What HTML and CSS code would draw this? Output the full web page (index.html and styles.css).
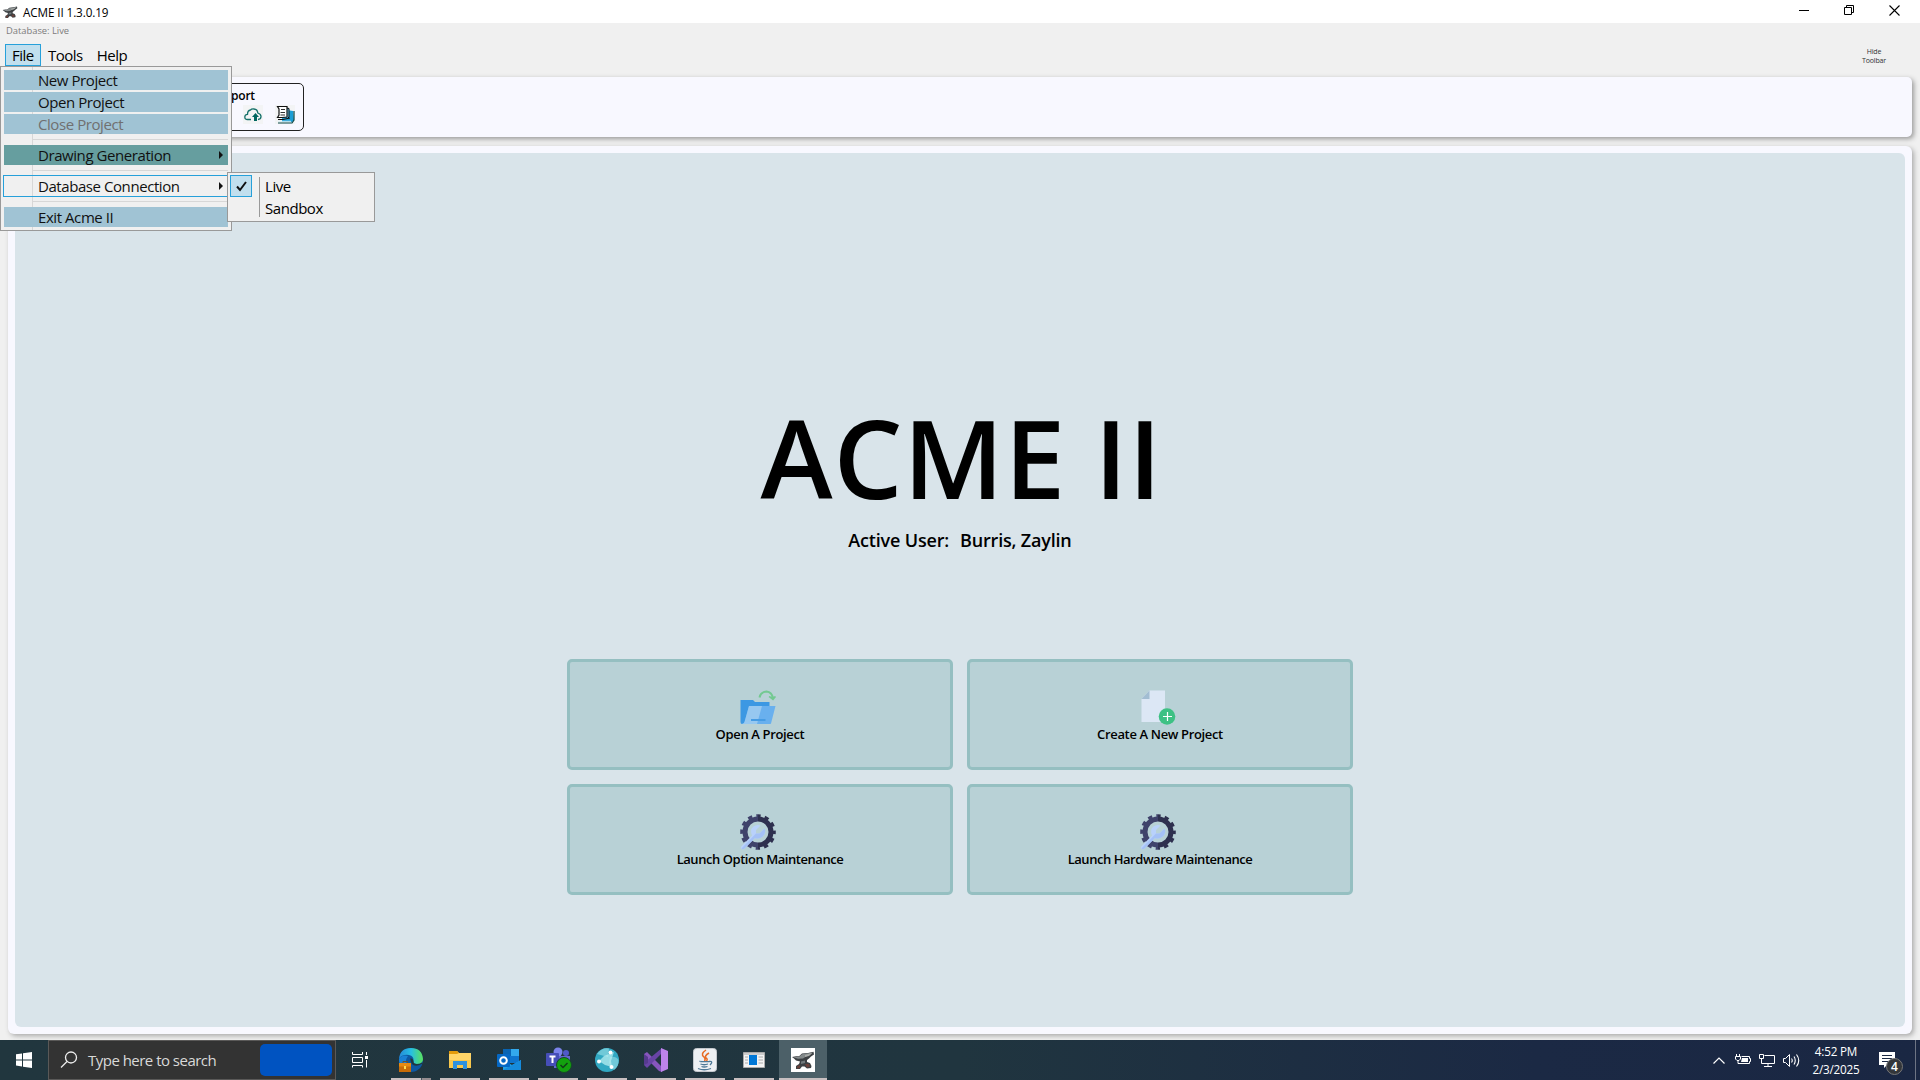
FILE: index.html
```html
<!DOCTYPE html>
<html lang="en">
<head>
<meta charset="utf-8">
<title>ACME II</title>
<link rel="stylesheet" href="styles.css">
</head>
<body>
<svg class="defs" width="0" height="0" aria-hidden="true">
  <defs>
    <symbol id="anvil" viewBox="0 0 24 24">
      <path d="M1 9 L5 8.300 L8 8.300 L11 5.500 L17 5 L22.500 3.800 L23 6.500 L20 8.500 L18 10.500 L16 12 L16 14 L19 15 L20.500 18 L20 20 L16 20.500 L13.500 18.500 L11 18.500 L9 21 L5 21 L5 18 L8 16 L9 13.500 L5 12.500 L3 10.500 Z" fill="#3c4043"/>
      <path d="M2 9.300 L8 8.800 L11 6.200 L22 4.500 L19 7 L15 8.500 L12 10.500 L7 10.800 Z" fill="#83898a"/>
      <path d="M14 7 L21 5 L18 8 L14 9 Z" fill="#a7aaa7"/>
      <path d="M10 13.500 L14 12.500 L14 15 L10 16 Z" fill="#70787b"/>
      <path d="M6 18.500 L9 17 L9 20 L6 20.500 Z M14 16 L18 16 L19 18.500 L16 19.500 Z" fill="#6b413a"/>
    </symbol>
    <linearGradient id="gearFill" x1="0" x2="1" y1="0" y2="0">
      <stop offset=".5" stop-color="#3f426b"/><stop offset=".5" stop-color="#2e304f"/>
    </linearGradient>
    <symbol id="gear" viewBox="0 0 36 36">
      <circle cx="18" cy="18" r="13" fill="none" stroke="url(#gearFill)" stroke-width="5"/>
      <circle cx="18" cy="18" r="16" fill="none" stroke="url(#gearFill)" stroke-width="3.6" stroke-dasharray="4.3 4.077" stroke-dashoffset="2.15"/>
      <path d="M.8 33 L12 21.500 Q9.500 15.500 13.500 12.500 Q17 10 20.500 11.500 L16 16 L16 19.500 L19.500 19.500 L24.500 14.500 Q26.500 19 22.500 22.800 Q19 25.500 15 24 L4 35 Q1 36 .8 33 Z" fill="#b9d1fb"/>
      <path d="M16 19.500 L19.500 19.500 L24.500 14.500 Q26.500 19 22.500 22.800 Q19 25.500 15 24 L4 35 Q2 35.500 1.500 34.500 Z" fill="#a5c1f6"/>
    </symbol>
  </defs>
</svg>

<div class="window">
  <header class="titlebar">
    <svg class="app-icon" width="16" height="16"><use href="#anvil"/></svg>
    <span class="app-title">ACME II 1.3.0.19</span>
    <div class="window-buttons">
      <svg width="10" height="10"><path d="M0 5.500H10" stroke="#000"/></svg>
      <svg width="10" height="10"><path d="M.5 2.500H7.500V9.500H.5Z M2.500 2.500V.5H9.500V7.500H7.500" fill="none" stroke="#000"/></svg>
      <svg width="11" height="11"><path d="M.5 .5L10.500 10.500M10.500 .5L.5 10.500" stroke="#000" stroke-width="1.100"/></svg>
    </div>
  </header>

  <div class="header">
    <div class="db-label">Database: Live</div>
    <nav class="menubar">
      <span class="menu-title open">File</span>
      <span class="menu-title">Tools</span>
      <span class="menu-title">Help</span>
    </nav>
    <div class="hide-toolbar">Hide<br>Toolbar</div>
  </div>

  <section class="toolbar">
    <div class="tool-group">
      <span class="tool-label">port</span>
      <div class="tool-icons">
        <span class="tool"><svg width="18" height="14" viewBox="0 0 18 14"><path d="M7 11.500H3.500Q.8 11.500 .8 9Q.8 6.500 3.500 6.300Q3.500 2.500 6.500 2Q7.500 .8 9.800 1Q13.500 1.300 13.800 5Q17.200 6 17 8.800Q16.800 11.500 14 11.500" fill="none" stroke="#16716b" stroke-width="1.300"/><path d="M11.500 5L15 9H13V13H10V9H8Z" fill="#00665f"/></svg></span>
        <span class="tool"><svg width="19" height="19" viewBox="0 0 19 19"><path d="M11 5L17 6L18 15L16 17H6V13Z" fill="#1b9ed6"/><path d="M11 3L13 3.500V12L11 14" fill="#6fc5e8" stroke="#111"/><path d="M1.500 1.500L11 1.500V12L6 12.500H1.500L3 10V4Z" fill="#fff" stroke="#111" stroke-width="1.200"/><path d="M5 4.500H9M4.500 7.500H9M4.500 10H9" stroke="#333"/><path d="M2 14.500H7L14 13" stroke="#111" fill="none"/><path d="M2 16.300H15" stroke="#d8eef2"/><path d="M2 18H16L18 15V6" stroke="#0a4747" stroke-width="1.200" fill="none"/></svg></span>
      </div>
    </div>
  </section>

  <main class="panel">
    <div class="home">
      <h1>ACME II</h1>
      <p class="user"><span>Active User:</span><span>Burris, Zaylin</span></p>
      <div class="actions">
        <button class="action">
          <svg width="36" height="36" viewBox="0 0 36 36"><path d="M.5 11H13L15 13H29.500V19L4 35H2Q.5 35 .5 33Z" fill="#3c98e3"/><path d="M9 17H35.500L31 34.500Q30.500 35 29.500 35H2Q4 34.500 4.500 33Z" fill="#69b0ee"/><path d="M9 17H22L17 35H2Q4 34.500 4.500 33Z" fill="#97c8f0"/><path d="M11 31H25.500" stroke="#469ce4" stroke-width="2"/><path d="M19.500 8.500Q20.500 3 26.500 2.500Q32 3 33 9.500" fill="none" stroke="#73c991" stroke-width="2"/><path d="M29 7.500L33 10.500L35.500 7.500" fill="#73c991" stroke="#73c991" stroke-width="1.500"/></svg>
          <span>Open A Project</span>
        </button>
        <button class="action">
          <svg width="36" height="36" viewBox="0 0 36 36"><path d="M9.500 1.500H25V33H1.500V10Z" fill="#dce7f5"/><path d="M1.500 10L9.500 1.500V10Z" fill="#a2bdd2"/><circle cx="27" cy="27.500" r="8.300" fill="#3dc184"/><path d="M27.500 23V32M23 27.500H32" stroke="#fff" stroke-width="1.200"/></svg>
          <span>Create A New Project</span>
        </button>
        <button class="action maintenance">
          <svg width="36" height="36"><use href="#gear"/></svg>
          <span>Launch Option Maintenance</span>
        </button>
        <button class="action maintenance">
          <svg width="36" height="36"><use href="#gear"/></svg>
          <span>Launch Hardware Maintenance</span>
        </button>
      </div>
    </div>
  </main>

  <footer class="taskbar">
    <div class="start"><svg width="16" height="16" viewBox="0 0 16 16"><path d="M0 2.200L6 1.400V7.400H0ZM7 1.200L16 0V7.400H7ZM0 8.400H6V14.400L0 13.600ZM7 8.400H16V16L7 14.700Z" fill="#fff"/></svg></div>
    <div class="search">
      <svg width="18" height="18" viewBox="0 0 18 18"><circle cx="11" cy="6.500" r="5.500" fill="none" stroke="#eee" stroke-width="1.300"/><path d="M7 10.500L1 16.500" stroke="#eee" stroke-width="1.300"/></svg>
      <span>Type here to search</span>
      <div class="highlight"></div>
    </div>
    <div class="task-view"><svg width="17" height="16" viewBox="0 0 17 16"><path d="M.5 0V2.500H10.500V0M.5 5.500H10.500V10.500H.5ZM.5 15.500V13.500H10.500V15.500M14.500 0V3M14.500 8V15.500" fill="none" stroke="#fff"/><path d="M13 4H16V7H13Z" fill="#fff"/></svg></div>
    <div class="apps">
      <div class="app grouped"><svg width="26" height="26" viewBox="0 0 26 26"><defs><linearGradient id="eg" x1="0" x2="1"><stop stop-color="#2689d8"/><stop offset=".5" stop-color="#27bfe3"/><stop offset="1" stop-color="#5be25b"/></linearGradient></defs><circle cx="13" cy="13" r="12" fill="#0d58a2"/><path d="M1 12Q2 1 13 1Q24 1 25 12Q25 17 19 17Q15 17 15.500 14Q16 9 11 8Q4 7 1 12Z" fill="url(#eg)"/><path d="M1 12Q4 7 10 9Q6 14 10 20L12 24Q1 23 1 12Z" fill="#1a80d4"/><path d="M15.500 14Q15 17 19 17Q22 17 24 15.500L24.500 17L26 14V18L23.500 17Q19 20 15 18Q12 15 12.500 11Q15.500 12 15.500 14Z" fill="#20373f"/><rect x="1" y="16" width="12" height="9" fill="#c76c07"/><path d="M1 16H13V19.500H1Z" fill="#e48a13"/><path d="M5 16V14.500H9.500V16" stroke="#67502a" fill="none"/><rect x="6" y="19" width="2" height="3" fill="#ffd84c"/></svg></div>
      <div class="app"><svg width="26" height="26" viewBox="0 0 26 26"><path d="M2 4H10L12 6H24V21H2Z" fill="#ffd568"/><path d="M2 4H10L12 6L10 7H2Z" fill="#e39b0b"/><path d="M2 13H24V21H2Z" fill="#f7c74c"/><path d="M6 14H20V22H16V18H10V22H6Z" fill="#2d91df"/></svg></div>
      <div class="app"><svg width="26" height="26" viewBox="0 0 26 26"><path d="M7 2H23V16H7Z" fill="#0f75ce"/><path d="M15 2H23V9H15Z" fill="#33a9ec"/><path d="M7 2H15V9H7Z" fill="#0964b3"/><path d="M7 13L16 18L25 13V23H7Z" fill="#21a0e6"/><path d="M7 23L25 13V23Z" fill="#168bdc"/><rect x="1" y="7" width="13" height="13" rx="1" fill="#0568c5"/><circle cx="7.500" cy="13.500" r="3.300" fill="none" stroke="#fff" stroke-width="2"/></svg></div>
      <div class="app"><svg width="28" height="28" viewBox="0 0 28 28"><circle cx="14" cy="6" r="4.500" fill="#7b83eb"/><circle cx="22" cy="7" r="3" fill="#5059c9"/><path d="M10 10H26V17Q25 22 20 22H10Z" fill="#6268ce"/><rect x="2" y="7" width="13" height="13" rx="1" fill="#464eb8"/><path d="M5.500 10.500H11.500M8.500 10.500V17" stroke="#fff" stroke-width="2"/><circle cx="20" cy="19" r="7.500" fill="#13a10e" stroke="#17482a"/><path d="M16.500 19L19 21.500L23.500 17" fill="none" stroke="#103e17" stroke-width="1.500"/></svg></div>
      <div class="app"><svg width="26" height="26" viewBox="0 0 26 26"><circle cx="13" cy="13" r="12" fill="#31a8c2"/><path d="M3 7Q8 0 15 1.500L14 10ZM16 10Q22 9 24.500 13Q25 19 20 23L15 16Z" fill="#70c9d8"/><path d="M10 9L20 5L17 14L18 20L11 18L5 14Z" fill="#b5edf0" opacity=".75"/><circle cx="16.500" cy="5.500" r="2" fill="#fff"/><circle cx="5" cy="14.500" r="2" fill="#fff"/><circle cx="17.500" cy="20" r="2" fill="#fff"/></svg></div>
      <div class="app"><svg width="26" height="26" viewBox="0 0 26 26"><path d="M1 7L4 5L19 20V25L16 24L1 9Z" fill="#8756bd"/><path d="M1 18L4 21L19 6V1L1 16Z" fill="#6844a5"/><path d="M1 7L5 10V16L1 18Z" fill="#563a8e"/><path d="M18 1L25 4V22L18 25Z" fill="#bd83ec"/></svg></div>
      <div class="app"><svg width="26" height="26" viewBox="0 0 26 26"><rect x="1.500" y="1.500" width="23" height="23" rx="3" fill="#edf0f3" stroke="#c4c9ce"/><path d="M14 3Q8 7 12 10Q14 12 12.500 14M17 6Q12 9 14 11Q16 12 14.500 14" fill="none" stroke="#e76b22" stroke-width="1.500"/><path d="M8 14Q7 15 17 14.500M8.500 17Q12 18.500 16 17M9.500 19.500Q12 20.500 15.500 19.500M6 21.500Q12 24 19 21.500M17 14.500Q22 14 18 18" fill="none" stroke="#4e7896" stroke-width="1.300"/></svg></div>
      <div class="app"><svg width="26" height="26" viewBox="0 0 26 26"><path d="M2.500 5.500H23.500V20.500H2.500Z" fill="#f3f3f3" stroke="#aaa"/><path d="M3 6H23V8H3Z" fill="#ccc"/><rect x="8" y="8" width="8" height="10" fill="#0078d7"/><path d="M4 10H7M4 13H7M4 16H7M17.500 10H22M17.500 13H22M17.500 16H22" stroke="#aaa"/></svg></div>
      <div class="app active"><svg class="anvil-tile" width="24" height="24"><use href="#anvil"/></svg></div>
    </div>
    <div class="tray">
      <svg class="chevron" width="12" height="7"><path d="M.5 6.500L6 1L11.500 6.500" fill="none" stroke="#fff" stroke-width="1.200"/></svg>
      <svg class="battery" width="16" height="12" viewBox="0 0 16 12"><path d="M1.500 0V2M4.500 0V2M3 6V9.500H5" fill="none" stroke="#fff"/><path d="M.5 2.500H5.500V5L4 6.500H2L.5 5Z" fill="none" stroke="#fff"/><path d="M6.500 2.500H14.500V4.500H15.500V7.500H14.500V9.500H4.500" fill="none" stroke="#fff"/><path d="M7 4H13V8H6Z" fill="#fff"/></svg>
      <svg class="network" width="16" height="13" viewBox="0 0 16 13"><path d="M5.500 1.500H15.500V9.500H2.500V4.500M9 9.500V12.500M5 12.500H13M.5 .5H4.500V4.500H.5Z" fill="none" stroke="#fff"/></svg>
      <svg class="volume" width="17" height="15" viewBox="0 0 17 15"><path d="M.5 5.500H2.500L6.500 1.500V13.500L2.500 9.500H.5Z" fill="none" stroke="#fff"/><path d="M8.500 5.500Q10 7.500 8.500 9.500M11 3.500Q13.500 7.500 11 11.500M13.500 1.500Q18 7.500 13.500 13.500" fill="none" stroke="#fff" stroke-width="1.100"/></svg>
      <div class="clock"><span>4:52 PM</span><span>2/3/2025</span></div>
      <div class="notifications"><svg width="16" height="16" viewBox="0 0 16 16"><path d="M0 0H16V13H8L5 16V13H0Z" fill="#fff"/><path d="M3 3.500H13M3 6.500H13M3 9.500H10" stroke="#1b2944"/></svg><span class="badge">4</span></div>
      <div class="show-desktop"></div>
    </div>
  </footer>
</div>

<div class="menu">
  <div class="item filled">New Project</div>
  <div class="item filled">Open Project</div>
  <div class="item filled disabled">Close Project</div>
  <div class="separator"></div>
  <div class="item teal">Drawing Generation<i class="arrow"></i></div>
  <div class="separator"></div>
  <div class="item hovered">Database Connection<i class="arrow"></i></div>
  <div class="separator"></div>
  <div class="item filled">Exit Acme II</div>
</div>

<div class="submenu">
  <div class="check"><svg width="11" height="11" viewBox="0 0 11 11"><path d="M1 5.500L4 9L10 1" fill="none" stroke="#111" stroke-width="2"/></svg></div>
  <div class="options"><span>Live</span><span>Sandbox</span></div>
</div>
</body>
</html>
```
FILE: styles.css
```css
* { box-sizing: border-box; }
body { margin: 0; background: #f0f0f0; font-family: "Open Sans", "Noto Sans", sans-serif; color: #000; overflow: hidden; }
svg { display: block; flex: none; }
.defs { position: absolute; }
.window { width: 1920px; height: 1080px; display: flex; flex-direction: column; }

.titlebar { height: 23px; background: #fff; display: flex; align-items: center; padding: 0 20px 0 2px; }
.app-title { margin-left: 5px; font-size: 11.7px; letter-spacing: -0.1px; line-height: 20px; }
.window-buttons { margin-left: auto; display: flex; align-items: center; gap: 35px; height: 20px; align-self: flex-start; }

.header { height: 54px; display: grid; grid-template-columns: 1fr 58px; grid-template-rows: 21px 33px; }
.db-label { padding-left: 6px; font-size: 9.4px; letter-spacing: -0.02px; line-height: 15px; color: #7c7c7c; }
.menubar { grid-row: 2; display: flex; height: 22px; padding-left: 5px; font-size: 15px; letter-spacing: -0.5px; line-height: 22px; }
.menu-title { padding: 0 7px; }
.menu-title.open { width: 36px; padding: 0 6px; line-height: 20px; border: 1px solid #26a0da; background: #c1dfee; }
.hide-toolbar { grid-column: 2; grid-row: 1 / 3; padding-top: 24px; font-size: 7px; line-height: 9px; color: #333; text-align: center; justify-self: start; letter-spacing: -0.15px; }

.toolbar { height: 60px; margin: 0 8px; border-radius: 5px; background: #f8f8ff; box-shadow: 2px 2px 5px #999; padding: 6px 7px; }
.tool-group { width: 289px; height: 48px; border: 1px solid #222; border-radius: 5px; display: flex; flex-direction: column; padding: 2px 8px 0 215px; }
.tool-label { font-size: 12px; font-weight: 600; line-height: 19px; letter-spacing: -0.2px; }
.tool-icons { display: flex; gap: 12px; padding-left: 12px; }
.tool { width: 20px; height: 19px; background: #f3f4f5; display: flex; align-items: center; justify-content: center; }

.panel { height: 888px; margin: 9px 8px 6px; padding: 7px; border-radius: 6px; background: #f8f8ff; box-shadow: 2px 2px 5px #aaa; }
.home { height: 874px; background: #d9e4ea; border-radius: 6px; display: flex; flex-direction: column; align-items: center; padding-top: 239px; }
h1 { margin: 0; height: 130px; font-size: 109px; line-height: 130px; font-weight: 600; letter-spacing: 0.8px; word-spacing: -1px; white-space: nowrap; padding-left: 3px; }
.user { margin: 2px 0 0; height: 34px; display: flex; gap: 11px; font-size: 18px; font-weight: 600; line-height: 32px; letter-spacing: -0.18px; }
.actions { margin-top: 101px; display: grid; grid-template-columns: 386px 386px; grid-template-rows: 111px 111px; gap: 14px; }
.action { display: flex; flex-direction: column; align-items: center; border: 3px solid #95bfc1; border-radius: 5px; background: #b8d1d6; padding: 27px 0 0; font: 600 13px/18px "Open Sans", sans-serif; color: #000; }
.action svg { margin-right: 4px; }
.action span { letter-spacing: -0.35px; line-height: 18px; }
.action.maintenance span { letter-spacing: -0.45px; }

.taskbar { height: 40px; display: flex; background: linear-gradient(90deg, #21363e 0%, #20353f 50%, #1b2944 80%, #1a2743 100%); color: #fff; }
.start { width: 48px; display: flex; align-items: center; justify-content: center; }
.search { width: 288px; border: 1px solid #5a5958; background: #333; display: flex; align-items: center; padding: 0 3px 0 11px; }
.search span { margin-left: 10px; font-size: 15px; letter-spacing: -0.52px; color: #d9d9d9; white-space: nowrap; }
.highlight { margin-left: auto; width: 72px; height: 32px; border-radius: 5px; background: #0053c1; }
.task-view { width: 55px; display: flex; align-items: center; padding-left: 16px; }
.apps { display: flex; gap: 9px; }
.app { position: relative; width: 40px; display: flex; align-items: center; justify-content: center; border-bottom: 2px solid #c8bfc0; padding-top: 2px; }
.app.grouped::after { content: ""; position: absolute; right: 0; bottom: -2px; width: 9px; height: 2px; background: #958d90; border-left: 1px solid #46555d; }
.app.active { width: 48px; margin-left: -4px; background: #4c6068; }
.anvil-tile { background: #fff; }
.tray { margin-left: auto; display: flex; align-items: center; }
.battery { margin-left: 10px; }
.network { margin-left: 8px; }
.volume { margin-left: 8px; }
.clock { width: 46px; margin-left: 13px; margin-right: -1px; display: flex; flex-direction: column; align-items: center; font-size: 11.7px; line-height: 18px; letter-spacing: -0.2px; white-space: nowrap; padding-bottom: 1px; }
.notifications { position: relative; margin-left: 21px; }
.badge { position: absolute; left: 7px; top: 6px; width: 17px; height: 17px; border: 1px solid #777; border-radius: 50%; background: #33363a; font-size: 12px; font-weight: 600; line-height: 15px; text-align: center; }
.show-desktop { height: 40px; margin-left: 20px; width: 5px; border-left: 1px solid #6d7484; }

.menu { position: absolute; left: 0; top: 66px; width: 232px; height: 165px; border: 1px solid #999; background: linear-gradient(90deg, transparent 31px, #d7d7d7 31px, #d7d7d7 32px, transparent 32px) #f0f0f0; padding: 3px; display: flex; flex-direction: column; gap: 2px; font-size: 15px; }
.item { display: flex; justify-content: space-between; align-items: center; height: 20px; padding: 0 5px 0 34px; line-height: 20px; letter-spacing: -0.43px; color: #111; }
.filled { background: #a0c3d4; }
.disabled { color: #707070; }
.teal { background: #669e9f; }
.hovered { height: 22px; margin: -1px; border: 1px solid #26a0da; }
.separator { height: 1px; margin: 3px 0 3px 28px; background: #d7d7d7; }
.arrow { border: 4px solid transparent; border-left-color: #111; border-right: 0; }
.submenu { position: absolute; left: 227px; top: 172px; width: 148px; height: 50px; border: 1px solid #999; background: #f0f0f0; display: flex; padding: 2px; }
.check { width: 22px; height: 22px; border: 1px solid #26a0da; background: #c1dfee; display: flex; align-items: center; justify-content: center; }
.options { margin: 2px 0 2px 7px; padding-left: 5px; border-left: 1px solid #999; display: flex; flex-direction: column; font-size: 15px; line-height: 22px; letter-spacing: -0.45px; }
.options span { margin-top: -2px; margin-bottom: 2px; }
```
